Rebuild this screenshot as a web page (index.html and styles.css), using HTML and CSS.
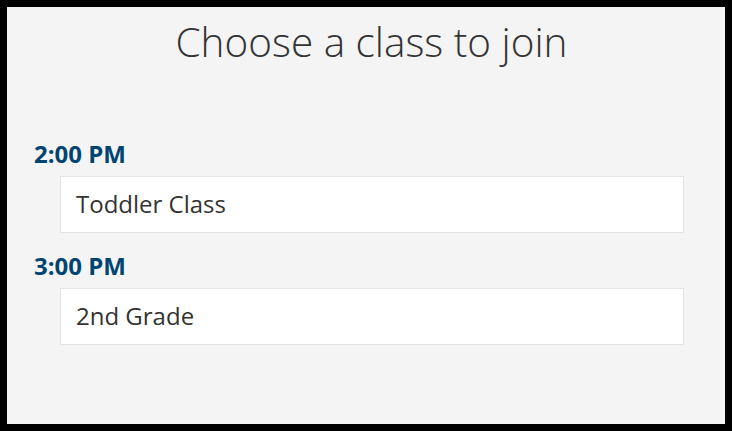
FILE: index.html
```html
<!DOCTYPE html>
<html lang="en">
<head>
  <meta charset="UTF-8">
  <meta name="viewport" content="width=device-width, initial-scale=1.0">
  <title>Choose a class</title>
  <link rel="stylesheet" href="styles.css">
</head>
<body>
  <div class="panel">
    <h1>Choose a class to join</h1>

    <div class="schedule">
      <div class="slot">
        <h2 class="slot-time">2:00 PM</h2>
        <div class="class-card">Toddler Class</div>
      </div>
      <div class="slot">
        <h2 class="slot-time">3:00 PM</h2>
        <div class="class-card">2nd Grade</div>
      </div>
    </div>
  </div>
</body>
</html>
```

FILE: styles.css
```css
/* General Styles */
html,
body {
  height: 100%;
}

body {
  margin: 0;
  background-color: #000;
  font-family: "Open Sans", "Liberation Sans", sans-serif;
  padding: 7px;
  box-sizing: border-box;
}

/* Panel */
.panel {
  background-color: #f4f4f4;
  height: 100%;
  box-sizing: border-box;
  padding: 11px 41px 0 27px;
}

h1 {
  margin: 0 0 72px;
  padding-left: 25px;
  text-align: center;
  font-weight: 300;
  font-size: 40.5px;
  line-height: 48px;
  color: #333;
}

/* Schedule */
.slot {
  margin-bottom: 17px;
}

.slot-time {
  margin: 0 0 6px;
  font-size: 24px;
  line-height: 32px;
  font-weight: 700;
  color: #004471;
}

.class-card {
  margin-left: 26px;
  background-color: #fff;
  border: 1px solid #e3e3e3;
  padding: 10px 15px 12px;
  font-size: 24px;
  line-height: 33px;
  color: #333;
}
```
